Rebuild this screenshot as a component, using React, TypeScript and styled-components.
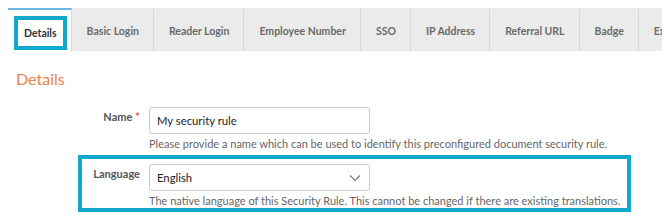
import React, { FC } from 'react';
import styled, { createGlobalStyle } from 'styled-components';

const GlobalStyle = createGlobalStyle`
  body {
    margin: 0;
    background: #fff;
    font-family: Lato, "Open Sans", sans-serif;
  }
`;

const Page = styled.div`
  padding: 8px;
  overflow: hidden;
  width: 670px;
  box-sizing: border-box;
`;

const TabBar = styled.div`
  display: flex;
  height: 43px;
  overflow: hidden;
  white-space: nowrap;
`;

const Tab = styled.div<{ $active?: boolean }>`
  display: flex;
  align-items: center;
  flex-shrink: 0;
  box-sizing: border-box;
  padding: ${(p) => (p.$active ? '0 4px 0 6px' : '0 14px 0 15px')};
  background: ${(p) => (p.$active ? '#fff' : '#ebebeb')};
  border-top: 2px solid ${(p) => (p.$active ? '#6cb6e6' : '#ebebeb')};
  border-right: 1px solid #d6d6d6;
  color: #6a6a6a;
  font-size: 10.5px;
  font-weight: 700;
`;

const Callout = styled.span`
  border: 4px solid #10a9cb;
  padding: 7px 6px 7px 6px;
  color: #333;
  margin-top: 4px;
`;

const Heading = styled.h2`
  margin: 17px 0 8px 8px;
  font-size: 16px;
  line-height: 22px;
  font-weight: 400;
  color: #e8834e;
`;

const Rows = styled.div`
  display: flex;
  flex-direction: column;
`;

const FormRow = styled.div<{ $highlight?: boolean }>`
  display: grid;
  grid-template-columns: 53px 1fr;
  column-gap: 9px;
  margin-left: 70px;
  width: 553px;
  box-sizing: border-box;
  border: 4px solid ${(p) => (p.$highlight ? '#10a9cb' : 'transparent')};
  padding: 5px 8px 0 5px;
`;

const Label = styled.label`
  text-align: right;
  font-size: 11px;
  font-weight: 700;
  color: #555;
  padding-top: 3px;
  white-space: nowrap;
`;

const Required = styled.span`
  color: #d9534f;
  margin-left: 3px;
`;

const Field = styled.div`
  display: flex;
  flex-direction: column;
`;

const Control = styled.div`
  display: flex;
  align-items: center;
  justify-content: space-between;
  width: 221px;
  height: 27px;
  box-sizing: border-box;
  border: 1px solid #ccc;
  border-radius: 3px;
  padding: 0 8px 0 7px;
  font-size: 11.3px;
  color: #222;
  background: #fff;
`;

const Help = styled.div`
  margin-top: 3px;
  font-size: 11px;
  line-height: 14px;
  color: #666;
  white-space: nowrap;
`;

const Chevron: FC = () => (
  <svg width="12" height="8" viewBox="0 0 12 8">
    <path d="M1 1.5 L6 6.5 L11 1.5" fill="none" stroke="#777" strokeWidth="1.2" />
  </svg>
);

const tabs = [
  'Basic Login',
  'Reader Login',
  'Employee Number',
  'SSO',
  'IP Address',
  'Referral URL',
  'Badge',
  'Expiry',
];

const App: FC = () => (
  <Page>
    <GlobalStyle />
    <TabBar>
      <Tab $active>
        <Callout>Details</Callout>
      </Tab>
      {tabs.map((t) => (
        <Tab key={t}>{t}</Tab>
      ))}
    </TabBar>
    <Heading>Details</Heading>
    <Rows>
      <FormRow>
        <Label>
          Name<Required>*</Required>
        </Label>
        <Field>
          <Control>My security rule</Control>
          <Help>Please provide a name which can be used to identify this preconfigured document security rule.</Help>
        </Field>
      </FormRow>
      <FormRow $highlight>
        <Label>Language</Label>
        <Field>
          <Control>
            English
            <Chevron />
          </Control>
          <Help>The native language of this Security Rule. This cannot be changed if there are existing translations.</Help>
        </Field>
      </FormRow>
    </Rows>
  </Page>
);

export default App;
